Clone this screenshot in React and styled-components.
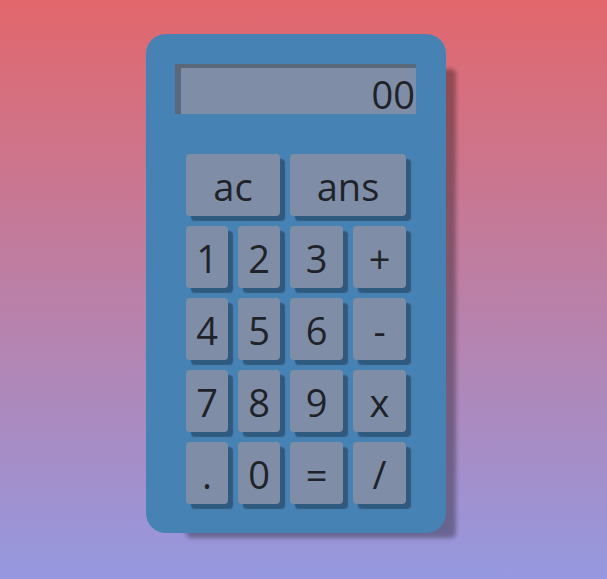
import React from "react";
import styled, { createGlobalStyle } from "styled-components";

const GlobalStyle = createGlobalStyle`
  html, body {
    margin: 0;
    height: 100%;
  }
  body {
    font-family: "Open Sans", "Noto Sans", sans-serif;
    background: linear-gradient(to bottom, #e2676c, #9598e0);
    min-height: 100vh;
  }
`;

const Page = styled.div`
  display: flex;
  align-items: flex-start;
  padding: 34px 0 0 146px;
`;

const Body = styled.div`
  width: 300px;
  height: 499px;
  box-sizing: border-box;
  padding: 30px 30px 29px 29px;
  background: #4682b4;
  border-radius: 20px;
  box-shadow: 25px 20px 4px -15px rgba(0, 0, 0, 0.32);
  display: flex;
  flex-direction: column;
  gap: 40px;
`;

const Screen = styled.div`
  height: 50px;
  box-sizing: border-box;
  background: #7f8ea6;
  border-left: 6px solid #5a6879;
  border-top: 4px solid #5a6879;
  color: #1f2329;
  font-size: 38px;
  line-height: 1;
  display: flex;
  align-items: flex-end;
  justify-content: flex-end;
  padding: 0 1px 1px 0;
`;

const Keys = styled.div`
  display: grid;
  grid-template-columns: 42px 42px 53px 53px;
  grid-auto-rows: 62px;
  gap: 10px;
  padding-left: 11px;
`;

const Key = styled.button`
  grid-column: span ${(p) => p.$span || 1};
  border: none;
  margin: 0;
  padding: 1px 0 0;
  background: #7f8ea6;
  color: #1f2329;
  border-radius: 4px;
  box-shadow: 5px 5px 1px rgba(0, 0, 0, 0.3);
  font-family: "Open Sans", "Noto Sans", sans-serif;
  font-size: 38px;
  line-height: 1;
  display: flex;
  align-items: center;
  justify-content: center;
  cursor: pointer;
`;

const rows = [
  ["1", "2", "3", "+"],
  ["4", "5", "6", "-"],
  ["7", "8", "9", "x"],
  [".", "0", "=", "/"],
];

export default function App() {
  return (
    <>
      <GlobalStyle />
      <Page>
        <Body>
          <Screen>00</Screen>
          <Keys>
            <Key $span={2}>ac</Key>
            <Key $span={2}>ans</Key>
            {rows.flat().map((k) => (
              <Key key={k}>{k}</Key>
            ))}
          </Keys>
        </Body>
      </Page>
    </>
  );
}
